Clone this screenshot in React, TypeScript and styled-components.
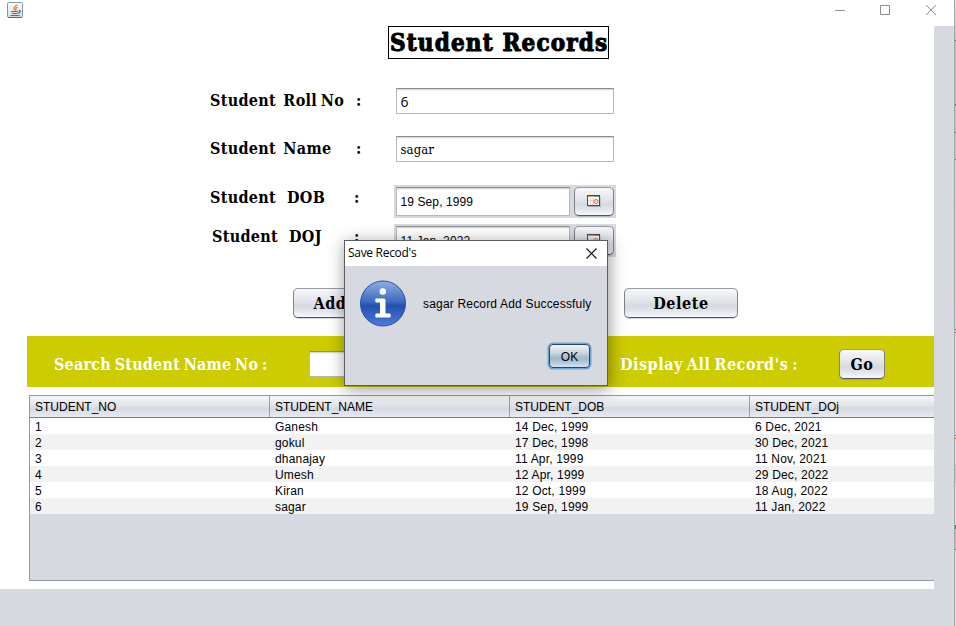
import React from "react";
import styled, { createGlobalStyle } from "styled-components";

const GlobalStyle = createGlobalStyle`
  *, *::before, *::after { box-sizing: border-box; }
  body { margin: 0; background: #fff; overflow: hidden; }
`;

const SERIF = `"DejaVu Serif Condensed", "DejaVu Serif", serif`;
const SANS = `"Liberation Sans", sans-serif`;

const Window = styled.div`
  position: relative;
  display: grid;
  grid-template-columns: 954px 2px;
  width: 956px;
  height: 626px;
  overflow: hidden;
  font: 12px/16px ${SANS};
  color: #000;
`;

const Frame = styled.div`
  display: flex;
  flex-direction: column;
  background: #d6d9e0;
`;

const Edge = styled.div`
  border-left: 1px solid #a5a5a5;
  background: linear-gradient(#e0e0e0 0, #c8c8c8 40px, #666 40px, #666 41px, #bebebe 41px, #bebebe 104px, #777 104px, #777 106px, #c4c4c4 106px, #c4c4c4 132px, #666 132px, #666 133px, #c4c4c4 133px, #c4c4c4 159px, #678 159px, #678 160px, #d0d0d0 160px, #d8d5cf 329px, #a86f20 329px, #a86f20 330px, #d8d5cf 330px, #d8d5cf 332px, #a86f20 332px, #a86f20 333px, #dcdad6 333px, #dcdad6 435px, #b07a30 435px, #b07a30 436px, #dcdad6 436px, #dcdad6 438px, #b07a30 438px, #b07a30 439px, #dcdad6 439px, #dcdad6 465px, #c8c8c8 465px, #c8c8c8 483px, #dcdad6 483px, #dcdad6 525px, #4a8a6c 525px, #4a8a6c 529px, #b4c0c8 529px, #b4c0c8 549px, #6b7d8c 549px, #6b7d8c 550px, #dcdad6 550px);
`;

const TitleBar = styled.div`
  display: flex;
  justify-content: space-between;
  height: 26px;
  padding: 2px 17px 0 7px;
  background: #fff;
`;

const Controls = styled.div`
  display: flex;
  gap: 34px;
  padding-top: 2px;
`;

const Content = styled.main`
  display: flex;
  flex-direction: column;
  width: 934px;
  height: 563px;
  background: #fff;
`;

const Heading = styled.h1`
  width: 221px;
  height: 33px;
  margin: 0 0 0 388px;
  padding-left: 1px;
  border: 1px solid #000;
  font: bold 24px/32px ${SERIF};
  font-stretch: condensed;
  letter-spacing: 1.15px;
  -webkit-text-stroke: 1px #000;
  white-space: nowrap;
`;

const FormRow = styled.div<{ $top: number; $height: number; $colon?: number }>`
  display: grid;
  grid-template-columns: ${(p) => p.$colon ?? 146}px 1fr 222px;
  align-items: center;
  width: 406px;
  height: ${(p) => p.$height}px;
  margin: ${(p) => p.$top}px 0 0 210px;
`;

const Label = styled.label<{ $shift?: number; $indent?: number; $tracking?: number }>`
  font: bold 16px/22px ${SERIF};
  font-stretch: condensed;
  letter-spacing: ${(p) => p.$tracking ?? 0.3}px;
  word-spacing: -1.6px;
  white-space: pre;
  padding-left: ${(p) => p.$indent ?? 0}px;
  margin-top: ${(p) => p.$shift ?? 0}px;
`;

const TextBox = styled.div<{ $width?: number; $height?: number; $font?: string; $stretch?: string }>`
  width: ${(p) => p.$width ?? 218}px;
  height: ${(p) => p.$height ?? 26}px;
  padding-left: 3.5px;
  border: 1px solid #b8b8b8;
  border-top-color: #8c8c8c;
  background: #fff;
  box-shadow: inset 0 1px 0 #d9d9d9, inset 0 2px 0 #f3f3f3;
  font: ${(p) => p.$font ?? `12px ${SANS}`};
  font-stretch: ${(p) => p.$stretch ?? "normal"};
  letter-spacing: 0.1px;
  line-height: ${(p) => (p.$height ?? 26) - 1}px;
  white-space: nowrap;
`;

const FieldSlot = styled.div`
  padding-left: 2px;
`;

const DatePicker = styled.div`
  display: flex;
  justify-content: space-between;
  width: 222px;
  height: 33px;
  padding: 2px;
  background: #d6d9e0;
`;

const Button = styled.button<{ $width: number; $height?: number }>`
  display: flex;
  flex: none;
  align-items: center;
  justify-content: center;
  width: ${(p) => p.$width}px;
  height: ${(p) => p.$height ?? 30}px;
  padding: 2px 0 0;
  border: 1px solid #7d828c;
  border-top-color: #969aa3;
  border-bottom-color: #50545c;
  border-radius: 5px;
  background: linear-gradient(#f7f8fa 0%, #e6e8ec 35%, #d6d9e0 62%, #e3e6ec 80%, #f5f8fe 100%);
  box-shadow: 0 1px 0 rgba(90, 95, 105, 0.25);
  color: #000;
  font: bold 16px/22px ${SERIF};
  font-stretch: condensed;
  letter-spacing: 0.6px;
`;

const PickerButton = styled(Button)`
  padding: 0 1px 1px 0;
`;

const ActionRow = styled.div`
  display: flex;
  gap: 257px;
  height: 30px;
  margin: 31px 0 0 293px;
`;

const SearchBar = styled.section`
  display: grid;
  grid-template-columns: 255px 311px 219px auto;
  align-items: center;
  height: 51px;
  margin: 18px 0 0 27px;
  padding: 5px 0 0 27px;
  background: #cccc00;
  color: #fff;
`;

const Table = styled.div`
  height: 186px;
  margin: 8px 0 0 29px;
  border: 1px solid #9297a1;
  border-right: 0;
  background: #d6d9e0;
`;

const TableRow = styled.div`
  display: grid;
  grid-template-columns: 240px 240px 240px 1fr;
  height: 16px;
  line-height: 18px;
  background: #fff;
  letter-spacing: 0.17px;
  &:nth-child(odd) { background: #f2f2f2; }
`;

const HeaderRow = styled(TableRow)`
  &&& {
    height: 22px;
    line-height: 23px;
    letter-spacing: 0;
    border-bottom: 1px solid #767b87;
    background: linear-gradient(#f5f6f8, #e2e4e9 45%, #d6d9e0 58%, #e6eaf3);
  }
`;

const Cell = styled.span`
  padding-left: 5px;
  white-space: nowrap;
`;

const HeaderCell = styled(Cell)`
  height: 21px;
  border-right: 1px solid #9a9ea8;
  &:last-child { border-right: 0; }
`;

const Dialog = styled.div`
  position: absolute;
  left: 344px;
  top: 240px;
  width: 264px;
  height: 146px;
  border: 1px solid #5c5d60;
  background: #d6d9e0;
  box-shadow: 1px 3px 16px rgba(0, 0, 0, 0.42);
`;

const DialogTitle = styled.div`
  display: flex;
  align-items: center;
  justify-content: space-between;
  height: 25px;
  padding: 0 10px 1px 3px;
  background: #fff;
  font: 12px/24px "Open Sans", sans-serif;
  letter-spacing: -0.3px;
`;

const DialogBody = styled.div`
  display: flex;
  align-items: center;
  gap: 17px;
  height: 46px;
  margin: 14px 0 0 14px;
  white-space: nowrap;
`;

const Message = styled.span`
  padding-top: 2px;
  letter-spacing: 0.18px;
`;

const OkButton = styled(Button)`
  margin: 18px 0 0 204px;
  padding-top: 1px;
  border-color: #27465f;
  border-radius: 4px;
  background: linear-gradient(#f0f4f7 0%, #cbd6df 35%, #a2b7c8 60%, #b4cadb 80%, #d2e5f5 100%);
  box-shadow: 0 0 0 1.5px #73a4d1;
  font: 12px/16px ${SANS};
  letter-spacing: 0;
`;

const JavaIcon = () => (
  <svg width="16" height="17" viewBox="0 0 16 17">
    <defs>
      <linearGradient id="java-bg" x2="0" y2="1">
        <stop stopColor="#fff" />
        <stop offset="1" stopColor="#d5dce2" />
      </linearGradient>
    </defs>
    <rect x=".5" y=".5" width="15" height="15" rx="1.2" fill="url(#java-bg)" stroke="#7e97a8" />
    <path d="M1 15.5h14" stroke="#4e6a7e" />
    <path d="M10.200 2.500C10 4 6.500 5 7 6.500c.2.8 1 1 .8 2.200M10.800 5C8.500 6 8.500 7 9.400 8.400" fill="none" stroke="#ee7d18" strokeWidth="1.300" />
    <path d="M4 9.500h7M5 11.500h5.500M11.500 8.500c2.500-.5 2.500 2-.5 2.800M3.500 13.500h9" fill="none" stroke="#486f8e" strokeWidth="1.200" />
  </svg>
);

const CalendarIcon = () => (
  <svg width="14" height="12" viewBox="0 0 14 12">
    <path d="M1 11.500h13V2" fill="none" stroke="#aaa" />
    <rect x=".5" y=".5" width="12" height="10" fill="#f7f6ef" stroke="#484848" />
    <path d="M1 1.500h6" stroke="#e4a04b" />
    <path d="M7 1.500h5" stroke="#7a94ad" />
    <path d="M3.500 3v7M6.500 3v7M1 5.500h5" stroke="#d8d8d8" />
    <circle cx="9" cy="6.500" r="2" fill="#fff" stroke="#e75b5b" />
    <path d="M9 5.500v1.500" stroke="#c96" />
  </svg>
);

const InfoIcon = () => (
  <svg width="47" height="47" viewBox="0 0 47 47">
    <defs>
      <linearGradient id="info-bg" x2="0" y2="1">
        <stop stopColor="#8faee2" />
        <stop offset=".46" stopColor="#3d6abf" />
        <stop offset=".55" stopColor="#2450ad" />
        <stop offset="1" stopColor="#4b7be0" />
      </linearGradient>
    </defs>
    <circle cx="24" cy="23.500" r="22.500" fill="url(#info-bg)" stroke="#2450a2" />
    <circle cx="23.800" cy="11.500" r="3.200" fill="#fff" />
    <path d="M17.500 18.500h7.500a1.500 1.500 0 0 1 1.500 1.500v13.500h4a1.200 1.200 0 0 1 1.200 1.200v1.600a1.200 1.200 0 0 1-1.200 1.200h-13a1.200 1.200 0 0 1-1.200-1.200v-1.600a1.200 1.200 0 0 1 1.200-1.200h3.500v-11h-3.500a1.200 1.200 0 0 1-1.200-1.200v-1.600a1.200 1.200 0 0 1 1.200-1.200z" fill="#fff" />
  </svg>
);

const records = [
  ["1", "Ganesh", "14 Dec, 1999", "6 Dec, 2021"],
  ["2", "gokul", "17 Dec, 1998", "30 Dec, 2021"],
  ["3", "dhanajay", "11 Apr, 1999", "11 Nov, 2021"],
  ["4", "Umesh", "12 Apr, 1999", "29 Dec, 2022"],
  ["5", "Kiran", "12 Oct, 1999", "18 Aug, 2022"],
  ["6", "sagar", "19 Sep, 1999", "11 Jan, 2022"],
];

const DateField = ({ value }: { value: string }) => (
  <DatePicker>
    <TextBox $width={174} $height={29}>{value}</TextBox>
    <PickerButton $width={40} $height={29} aria-label="Choose date"><CalendarIcon /></PickerButton>
  </DatePicker>
);

export default function App() {
  return (
    <>
      <GlobalStyle />
      <Window>
        <Frame>
          <TitleBar>
            <JavaIcon />
            <Controls>
              <svg width="12" height="13" viewBox="0 0 12 13"><path d="M2 6.500h10" stroke="#8c8c8c" /></svg>
              <svg width="12" height="13" viewBox="0 0 12 13"><path d="M1.500 1.500h9v9h-9z" fill="none" stroke="#8c8c8c" /></svg>
              <svg width="12" height="13" viewBox="0 0 12 13"><path d="M1 1l10 10M11 1L1 11" stroke="#8c8c8c" /></svg>
            </Controls>
          </TitleBar>
          <Content>
            <Heading>Student Records</Heading>
            <FormRow $top={29} $height={26}>
              <Label>{"Student  Roll No"}</Label>
              <Label>:</Label>
              <FieldSlot><TextBox $font={`14px "Open Sans", sans-serif`}>6</TextBox></FieldSlot>
            </FormRow>
            <FormRow $top={22} $height={26}>
              <Label>{"Student  Name"}</Label>
              <Label>:</Label>
              <FieldSlot><TextBox $font={`13px ${SERIF}`} $stretch="condensed">sagar</TextBox></FieldSlot>
            </FormRow>
            <FormRow $top={23} $height={33} $colon={144}>
              <Label $shift={-8}>{"Student   DOB"}</Label>
              <Label $shift={-8}>:</Label>
              <DateField value="19 Sep, 1999" />
            </FormRow>
            <FormRow $top={6} $height={33} $colon={144}>
              <Label $shift={-8} $indent={2}>{"Student   DOJ"}</Label>
              <Label $shift={-8}>:</Label>
              <DateField value="11 Jan, 2022" />
            </FormRow>
            <ActionRow>
              <Button $width={74}>Add</Button>
              <Button $width={114}>Delete</Button>
            </ActionRow>
            <SearchBar>
              <Label $shift={2} $tracking={0.22}>Search Student Name No :</Label>
              <TextBox $width={180} />
              <Label $shift={2} $tracking={0.52}>Display All Record's :</Label>
              <Button $width={46}>Go</Button>
            </SearchBar>
            <Table>
              <HeaderRow>
                {["STUDENT_NO", "STUDENT_NAME", "STUDENT_DOB", "STUDENT_DOj"].map((name) => (
                  <HeaderCell key={name}>{name}</HeaderCell>
                ))}
              </HeaderRow>
              {records.map((record) => (
                <TableRow key={record[0]}>
                  {record.map((value, i) => <Cell key={i}>{value}</Cell>)}
                </TableRow>
              ))}
            </Table>
          </Content>
        </Frame>
        <Edge />
        <Dialog role="dialog" aria-label="Save Recod's">
          <DialogTitle>
            <span>Save Recod's</span>
            <svg width="11" height="11" viewBox="0 0 11 11"><path d="M.5.5l10 10M10.500.5l-10 10" stroke="#111" strokeWidth="1.100" /></svg>
          </DialogTitle>
          <DialogBody>
            <InfoIcon />
            <Message>sagar Record Add Successfuly</Message>
          </DialogBody>
          <OkButton $width={41} $height={24}>OK</OkButton>
        </Dialog>
      </Window>
    </>
  );
}
